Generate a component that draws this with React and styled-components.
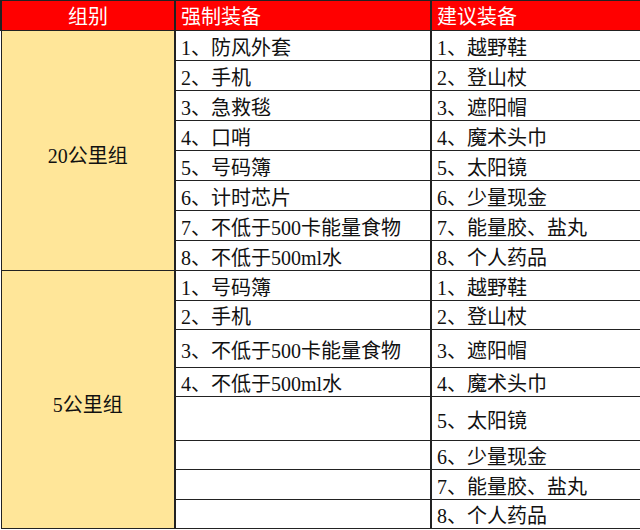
import React from "react";
import styled, { createGlobalStyle } from "styled-components";

const groups = [
  {
    name: "20公里组",
    rows: [
      { must: "1、防风外套", advice: "1、越野鞋", h: 30 },
      { must: "2、手机", advice: "2、登山杖", h: 30 },
      { must: "3、急救毯", advice: "3、遮阳帽", h: 30 },
      { must: "4、口哨", advice: "4、魔术头巾", h: 30 },
      { must: "5、号码簿", advice: "5、太阳镜", h: 30 },
      { must: "6、计时芯片", advice: "6、少量现金", h: 30 },
      { must: "7、不低于500卡能量食物", advice: "7、能量胶、盐丸", h: 30 },
      { must: "8、不低于500ml水", advice: "8、个人药品", h: 30 },
    ],
  },
  {
    name: "5公里组",
    rows: [
      { must: "1、号码簿", advice: "1、越野鞋", h: 30 },
      { must: "2、手机", advice: "2、登山杖", h: 29 },
      { must: "3、不低于500卡能量食物", advice: "3、遮阳帽", h: 38 },
      { must: "4、不低于500ml水", advice: "4、魔术头巾", h: 29 },
      { must: "", advice: "5、太阳镜", h: 44 },
      { must: "", advice: "6、少量现金", h: 29 },
      { must: "", advice: "7、能量胶、盐丸", h: 30 },
      { must: "", advice: "8、个人药品", h: 29 },
    ],
  },
]; // 表格数据

const GlobalStyle = createGlobalStyle`
  body {
    margin: 0;
    background: #fff;
    font-family: "Liberation Serif", "Noto Sans CJK SC", serif;
  }
`;

const Table = styled.table`
  width: 640px;
  border-collapse: collapse;
  table-layout: fixed;
  font-size: 20px;
  color: #111;
  border: 1px solid #555;
`;

const Row = styled.tr`
  height: ${(p) => p.$h}px;
`;

const HeadCell = styled.th`
  background: #ff0000;
  color: #fff;
  font-weight: normal;
  text-align: ${(p) => (p.$center ? "center" : "left")};
  padding: 3px 5px 0;
  border: 1px solid #222;
  border-left-width: 2px;
  line-height: 24px;
`;

const GroupCell = styled.td`
  background: #ffe699;
  text-align: center;
  vertical-align: middle;
  border: 1px solid #222;
  border-right-width: 2px;
  padding-top: 8px;
`;

const ItemCell = styled.td`
  padding: 4px 5px 0;
  vertical-align: middle;
  white-space: nowrap;
  border: 1px solid #222;
  border-right-width: 2px;
  line-height: 24px;
`;

export default function App() {
  return (
    <>
      <GlobalStyle />
      <Table>
        <colgroup>
          <col style={{ width: 174 }} />
          <col style={{ width: 256 }} />
          <col style={{ width: 210 }} />
        </colgroup>
        <thead>
          <Row $h={30}>
            <HeadCell $center>组别</HeadCell>
            <HeadCell>强制装备</HeadCell>
            <HeadCell>建议装备</HeadCell>
          </Row>
        </thead>
        <tbody>
          {groups.map((g) =>
            g.rows.map((r, i) => (
              <Row key={g.name + i} $h={r.h}>
                {i === 0 && <GroupCell rowSpan={g.rows.length}>{g.name}</GroupCell>}
                <ItemCell>{r.must}</ItemCell>
                <ItemCell>{r.advice}</ItemCell>
              </Row>
            ))
          )}
        </tbody>
      </Table>
    </>
  );
}
